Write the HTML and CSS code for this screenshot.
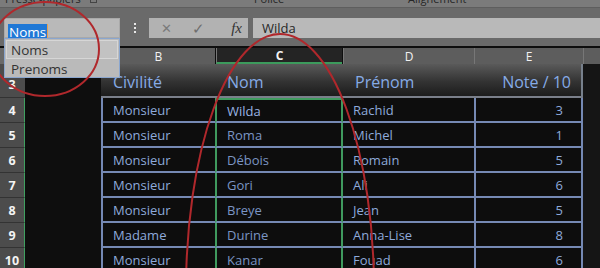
FILE: index.html
```html
<!DOCTYPE html>
<html>

<head>
    <link rel="stylesheet" href="styles.css">
</head>

<body>
    <div class="ribbon">
        <span class="grp g-clip">Presse-papiers <i class="launch"></i></span>
        <span class="grp g-font">Police</span>
        <span class="grp g-align">Alignement</span>
        <i class="launch l-end"></i>
    </div>

    <div class="band">
        <div class="namebox"><span class="sel">Noms</span></div>
        <div class="dots"><b></b><b></b><b></b></div>
        <div class="btns">
            <span class="b-x">✕</span>
            <span class="b-ok">✓</span>
            <span class="b-fx">fx</span>
        </div>
        <div class="formula">Wilda</div>
    </div>

    <div class="sheet">
        <!-- column headers (A is under the list) -->
        <div class="ch corner"></div>
        <div class="ch"></div>
        <div class="ch">B</div>
        <div class="ch cur">C</div>
        <div class="ch">D</div>
        <div class="ch">E</div>
        <div class="ch last"></div>

        <!-- row 3 : table header -->
        <div class="rh top">3</div>
        <div class="blank"></div>
        <div class="th">Civilité</div>
        <div class="th">Nom</div>
        <div class="th">Prénom</div>
        <div class="th num">Note / 10</div>
        <div class="out"></div>

        <div class="rh">4</div>
        <div class="blank"></div>
        <div class="td">Monsieur</div>
        <div class="td c first">Wilda</div>
        <div class="td d">Rachid</div>
        <div class="td num">3</div>
        <div class="out"></div>

        <div class="rh">5</div>
        <div class="blank"></div>
        <div class="td">Monsieur</div>
        <div class="td c">Roma</div>
        <div class="td d">Michel</div>
        <div class="td num">1</div>
        <div class="out"></div>

        <div class="rh">6</div>
        <div class="blank"></div>
        <div class="td">Monsieur</div>
        <div class="td c">Débois</div>
        <div class="td d">Romain</div>
        <div class="td num">5</div>
        <div class="out"></div>

        <div class="rh">7</div>
        <div class="blank"></div>
        <div class="td">Monsieur</div>
        <div class="td c">Gori</div>
        <div class="td d">Ali</div>
        <div class="td num">6</div>
        <div class="out"></div>

        <div class="rh">8</div>
        <div class="blank"></div>
        <div class="td">Monsieur</div>
        <div class="td c">Breye</div>
        <div class="td d">Jean</div>
        <div class="td num">5</div>
        <div class="out"></div>

        <div class="rh">9</div>
        <div class="blank"></div>
        <div class="td">Madame</div>
        <div class="td c">Durine</div>
        <div class="td d">Anna-Lise</div>
        <div class="td num">8</div>
        <div class="out"></div>

        <div class="rh">10</div>
        <div class="blank"></div>
        <div class="td">Monsieur</div>
        <div class="td c">Kanar</div>
        <div class="td d">Fouad</div>
        <div class="td num">6</div>
        <div class="out"></div>
    </div>

    <div class="dropdown">
        <div class="item hover">Noms</div>
        <div class="item">Prenoms</div>
    </div>

    <svg class="marks" width="600" height="268" viewBox="0 0 600 268">
        <ellipse cx="45" cy="49" rx="54" ry="47" />
        <ellipse cx="280" cy="290" rx="94" ry="256" />
    </svg>
</body>

</html>
```

FILE: styles.css
```css
* {
    padding: 0;
    margin: 0;
    box-sizing: border-box;
}

body {
    width: 600px;
    height: 268px;
    overflow: hidden;
    position: relative;
    background: #0e0e0e;
    font-family: "Open Sans", "Noto Sans", sans-serif;
}

/* ribbon group labels, only the bottom is visible */
.ribbon {
    height: 7px;
    background: #7b7b7b;
    position: relative;
    overflow: hidden;
    font-size: 11px;
    color: #262626;
    white-space: nowrap;
}

.ribbon .grp {
    position: absolute;
    top: -9px;
}

.g-clip {
    left: 5px;
}

.g-font {
    left: 254px;
}

.g-align {
    left: 408px;
}

.launch {
    display: inline-block;
    width: 7px;
    height: 7px;
    border: 1px solid #444;
    margin-left: 6px;
}

.l-end {
    position: absolute;
    left: 596px;
    top: -3px;
}

/* formula bar */
.band {
    height: 39px;
    background: #6a6a6a;
    border-top: 1px solid #5e5e5e;
    padding: 10px 0 0 4px;
    display: flex;
    align-items: flex-start;
}

.namebox {
    width: 116px;
    height: 20px;
    background: #b9b9b9;
    border: 1px solid #a9a9a9;
    padding: 1px 0 0 3px;
}

.namebox .sel {
    display: inline-block;
    background: #1f78d6;
    color: #fff;
    font-size: 13.5px;
    line-height: 16px;
    padding: 0 1px;
    border-right: 1px solid #e6a050;
}

.dots {
    width: 29px;
    height: 20px;
    display: flex;
    flex-direction: column;
    align-items: center;
    justify-content: center;
    gap: 2px;
}

.dots b {
    width: 2px;
    height: 2px;
    background: #e8e8e8;
}

.btns {
    width: 99px;
    height: 20px;
    background: #b2b2b2;
    display: flex;
    align-items: center;
    color: #7a7a7a;
}

.btns span {
    width: 33px;
    text-align: center;
    font-size: 13px;
}

.btns .b-x {
    padding-left: 2px;
}

.btns .b-ok {
    font-size: 15px;
    color: #6e6e6e;
}

.btns .b-fx {
    font-family: "Liberation Serif", serif;
    font-style: italic;
    font-size: 15px;
    color: #333;
    text-align: right;
    padding-right: 6px;
}

.formula {
    flex: 1;
    margin-left: 5px;
    height: 20px;
    background: #b9b9b9;
    font-size: 13px;
    color: #262626;
    padding: 1px 0 0 9px;
}

/* grid */
.sheet {
    display: grid;
    grid-template-columns: 25px 76px 114px 128px 131px 109px 17px;
    grid-template-rows: 18px 34px repeat(7, 25px);
}

.ch {
    background: #5d5d5d;
    color: #f2f2f2;
    font-size: 12px;
    display: flex;
    align-items: center;
    justify-content: center;
    border-left: 1px solid #777;
    margin-top: 2px;
}

.ch.corner {
    border-left: none;
    background: #6a6a6a;
}

.ch.cur {
    background: #242424;
    border-bottom: 2px solid #3c9a5c;
    margin-left: 1px;
    margin-right: 1px;
    font-weight: bold;
}

.ch.last {
    background: #5d5d5d;
}

.rh {
    background: #4c4c4c;
    color: #f4f4f4;
    font-size: 12.5px;
    font-weight: bold;
    display: flex;
    align-items: flex-end;
    justify-content: center;
    padding-bottom: 3px;
    border-bottom: 1px solid #333;
    border-right: 1px solid #3fa060;
}

.rh.top {
    border-right: 1px solid #4c4c4c;
    padding-bottom: 4px;
}

.blank {
    background: #0e0e0e;
}

.th {
    background: linear-gradient(#5a5a5a, #333 55%, #1c1c1c);
    border-bottom: 2px solid #7a7f8a;
    color: #86abe6;
    font-size: 16px;
    display: flex;
    align-items: center;
    padding: 4px 0 0 12px;
}

.th.num {
    justify-content: flex-end;
    padding-right: 10px;
    border-right: 2px solid #77808c;
}

.out {
    background: #151515;
}

.td {
    background: #0d0d0d;
    color: #8eaadb;
    font-size: 13px;
    display: flex;
    align-items: center;
    padding: 1px 0 0 10px;
    border-left: 2px solid #7589b4;
    border-bottom: 2px solid #7589b4;
}

.td.c {
    color: #7b95c4;
    border-left-color: #3f9a5e;
    border-right: 2px solid #3f9a5e;
}

.td.c.first {
    color: #9ab4e4;
    border-top: 2px solid #3f9a5e;
}

.td.d {
    border-left: none;
}

.td.num {
    justify-content: flex-end;
    padding-right: 18px;
    border-right: 2px solid #7589b4;
}

/* name box list */
.dropdown {
    position: absolute;
    left: 4px;
    top: 38px;
    width: 116px;
    height: 40px;
    background: #bababa;
    border: 1px solid #8aa6cf;
    padding: 1px 1px;
}

.dropdown .item {
    height: 19px;
    font-size: 13.5px;
    color: #333;
    padding: 0 0 0 4px;
    line-height: 18px;
    border: 1px solid transparent;
}

.dropdown .item.hover {
    background: #c2c2c2;
    border-color: #d6d6d6;
}

.marks {
    position: absolute;
    left: 0;
    top: 0;
    pointer-events: none;
}

.marks ellipse {
    fill: none;
    stroke: #b0282c;
    stroke-width: 2;
}
```
